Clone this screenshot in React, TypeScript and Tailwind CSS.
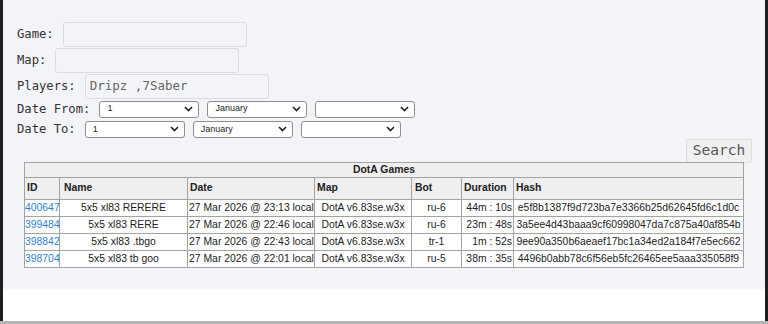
import React from 'react'

const games = [
    { id: '400647', name: '5x5 xl83 RERERE', date: '27 Mar 2026 @ 23:13 local', map: 'DotA v6.83se.w3x', bot: 'ru-6', duration: '44m : 10s', hash: 'e5f8b1387f9d723ba7e3366b25d62645fd6c1d0c' },
    { id: '399484', name: '5x5 xl83 RERE', date: '27 Mar 2026 @ 22:46 local', map: 'DotA v6.83se.w3x', bot: 'ru-6', duration: '23m : 48s', hash: '3a5ee4d43baaa9cf60998047da7c875a40af854b' },
    { id: '398842', name: '5x5 xl83 .tbgo', date: '27 Mar 2026 @ 22:43 local', map: 'DotA v6.83se.w3x', bot: 'tr-1', duration: '1m : 52s', hash: '9ee90a350b6aeaef17bc1a34ed2a184f7e5ec662' },
    { id: '398704', name: '5x5 xl83 tb goo', date: '27 Mar 2026 @ 22:01 local', map: 'DotA v6.83se.w3x', bot: 'ru-5', duration: '38m : 35s', hash: '4496b0abb78c6f56eb5fc26465ee5aaa335058f9' },
]

function Select({ text }: { text: string }) {
    return (
        <div className="flex h-[17px] w-[100px] items-center justify-between rounded-[3px] border border-[#8f8f8f] bg-white pl-[7px] pr-[5px] font-['Liberation_Sans',sans-serif] text-[9px] text-[#222]">
            <span>{text}</span>
            <svg width="9" height="6" viewBox="0 0 9 6" fill="none">
                <path d="M1 1l3.5 3.5L8 1" stroke="#222" strokeWidth="1.6" />
            </svg>
        </div>
    )
}

function Field({ label, value, width }: { label: string, value?: string, width: string }) {
    return (
        <div className="flex items-center gap-[9px]">
            <span>{label}</span>
            <div className={`flex h-[25px] ${width} items-center rounded-[3px] border border-[#dcdcdc] bg-[#f3f4f8] px-[4px] text-[12.5px] text-[#666]`}>
                {value}
            </div>
        </div>
    )
}

const cell = 'border border-[#a3a3a3] py-0 leading-[14px]'

export default function App() {
    return (
        <div className="flex h-[324px] w-[768px] flex-col bg-[#1e1e1e]">
            <div className="mx-[3px] flex flex-1 flex-col bg-white">
                <div className="flex h-[289px] flex-col bg-[#f3f4f8] pt-[22px] font-['DejaVu_Sans_Mono',monospace] text-[12.2px] text-[#333]">
                    <div className="flex flex-col gap-[1px] pl-[14px]">
                        <Field label="Game:" width="w-[184px]" />
                        <Field label="Map:" width="w-[184px]" />
                        <Field label="Players:" value="Dripz ,7Saber" width="w-[184px]" />
                        <div className="flex items-center gap-[9px]">
                            <span>Date From:</span>
                            <div className="flex gap-[8px]">
                                <Select text="1" />
                                <Select text="January" />
                                <Select text="" />
                            </div>
                        </div>
                        <div className="mt-[1px] flex items-center gap-[9px]">
                            <span>Date To:</span>
                            <div className="flex gap-[8px]">
                                <Select text="1" />
                                <Select text="January" />
                                <Select text="" />
                            </div>
                        </div>
                    </div>
                    <div className="flex justify-end pr-[13px]">
                        <button className="h-[24px] w-[66px] rounded-[2px] border border-[#dedede] bg-[#f0f0f0] text-[14.5px] text-[#555]">
                            Search
                        </button>
                    </div>
                    <table className="mx-auto -mt-[1px] w-[720px] table-fixed border-collapse border border-[#a3a3a3] font-['Liberation_Sans',sans-serif] text-[10.4px] text-[#222]">
                        <colgroup>
                            <col className="w-[35px]" />
                            <col className="w-[128px]" />
                            <col className="w-[127px]" />
                            <col className="w-[97px]" />
                            <col className="w-[50px]" />
                            <col className="w-[52px]" />
                            <col />
                        </colgroup>
                        <thead>
                            <tr className="h-[15px] bg-[#efefef]">
                                <th colSpan={7} className={`${cell} text-center font-bold`}>DotA Games</th>
                            </tr>
                            <tr className="h-[22px] bg-[#efefef] text-left">
                                <th className={`${cell} px-[2px] font-bold`}>ID</th>
                                <th className={`${cell} px-[4px] font-bold`}>Name</th>
                                <th className={`${cell} px-[2px] font-bold`}>Date</th>
                                <th className={`${cell} px-[2px] font-bold`}>Map</th>
                                <th className={`${cell} px-[3px] font-bold`}>Bot</th>
                                <th className={`${cell} px-[2px] font-bold`}>Duration</th>
                                <th className={`${cell} px-[2px] font-bold`}>Hash</th>
                            </tr>
                        </thead>
                        <tbody>
                            {games.map((g) => (
                                <tr key={g.id} className="h-[17px] bg-white">
                                    <td className={`${cell} px-0 text-[#2f7fd8]`}>{g.id}</td>
                                    <td className={`${cell} text-center`}>{g.name}</td>
                                    <td className={`${cell} whitespace-nowrap px-[1px]`}>{g.date}</td>
                                    <td className={`${cell} whitespace-nowrap text-center`}>{g.map}</td>
                                    <td className={`${cell} text-center`}>{g.bot}</td>
                                    <td className={`${cell} whitespace-nowrap px-[1px] text-right`}>{g.duration}</td>
                                    <td className={`${cell} whitespace-nowrap text-center`}>{g.hash}</td>
                                </tr>
                            ))}
                        </tbody>
                    </table>
                </div>
            </div>
            <div className="h-[3px] bg-[#b4b4b4]" />
        </div>
    )
}
